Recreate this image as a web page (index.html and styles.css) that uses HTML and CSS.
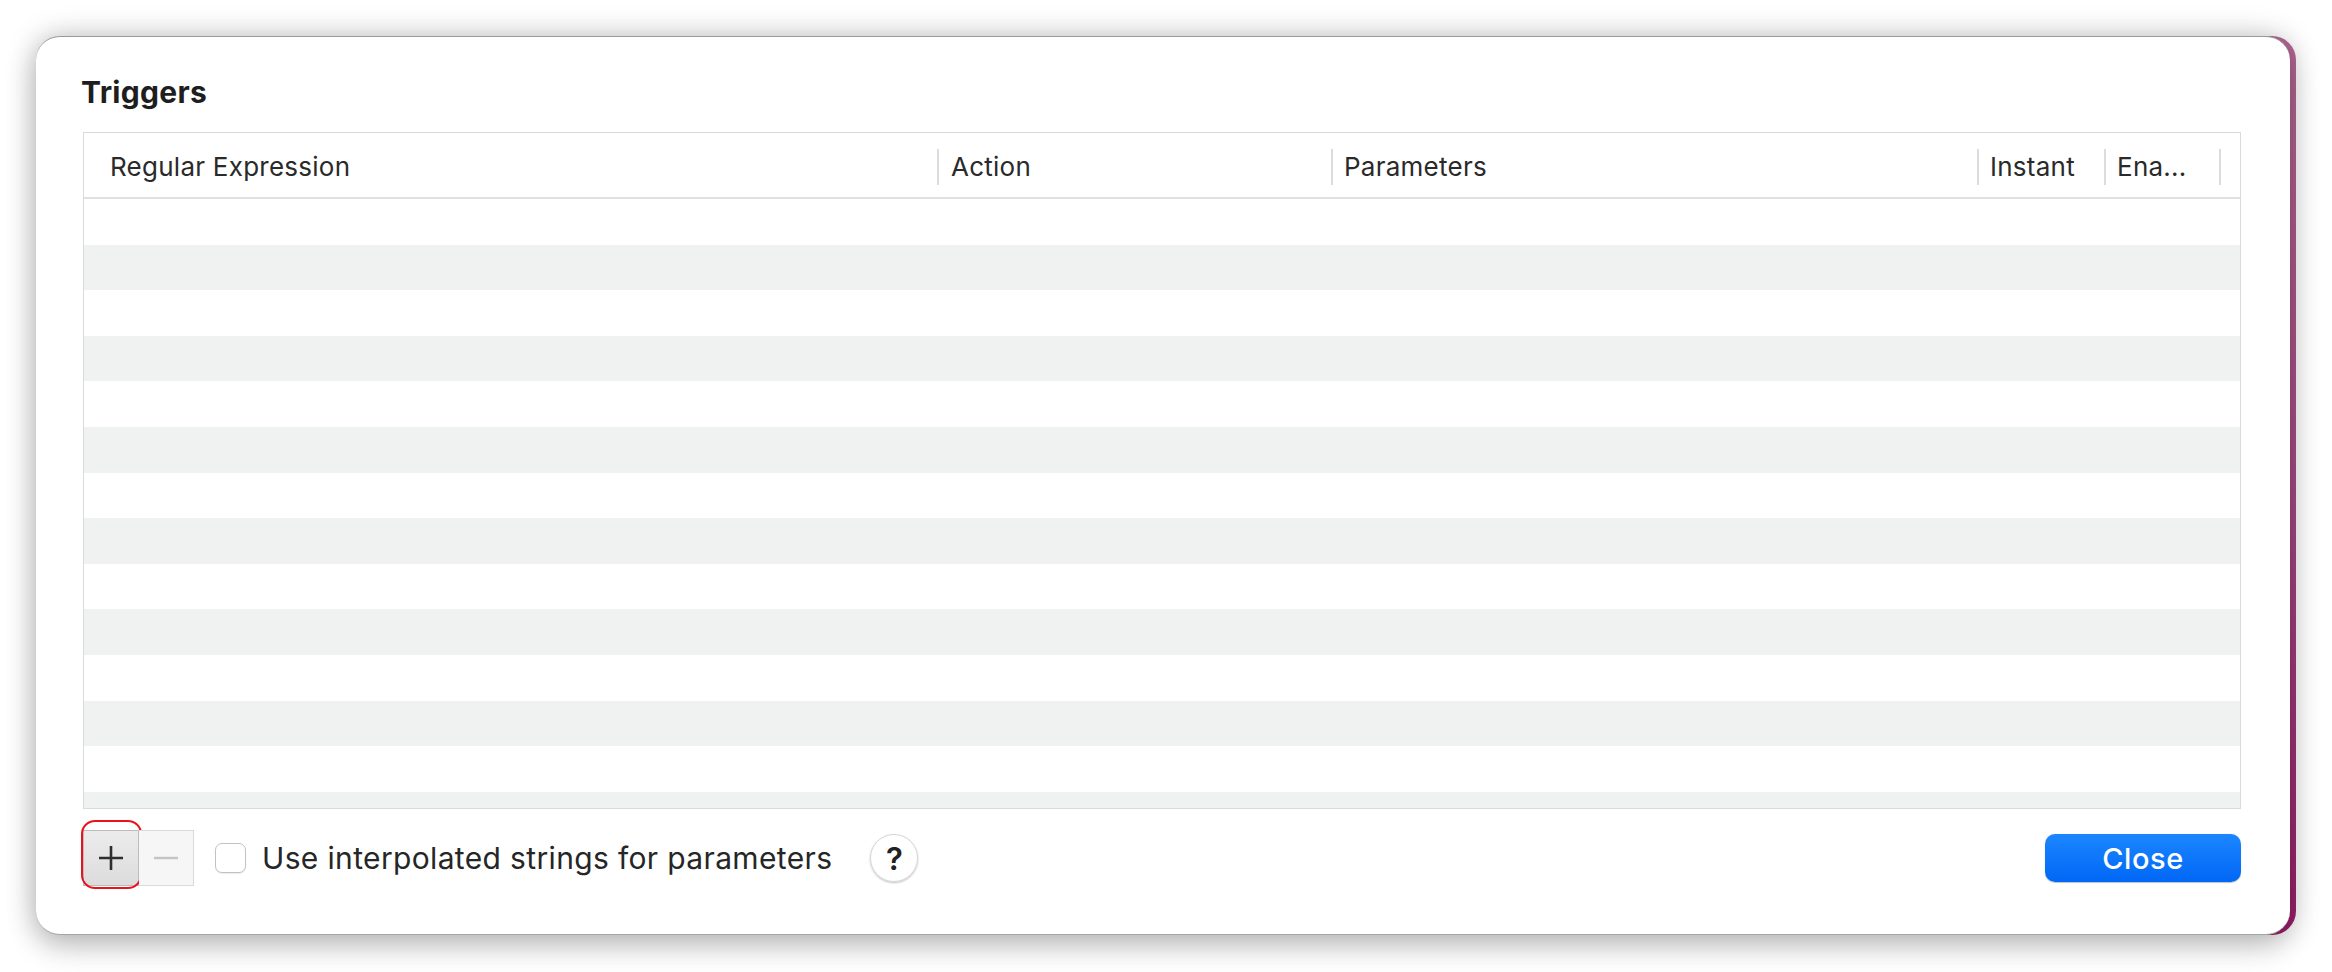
FILE: index.html
```html
<!DOCTYPE html>
<html>
<head>
<meta charset="utf-8">
<link rel="stylesheet" href="styles.css">
</head>
<body>
<div class="stage">
  <div class="backdrop"></div>
  <div class="dialog">
    <div class="title">Triggers</div>
    <div class="table">
      <div class="thead">
        <div class="th c1">Regular Expression</div>
        <div class="th c2 sep">Action</div>
        <div class="th c3 sep">Parameters</div>
        <div class="th c4 sep">Instant</div>
        <div class="th c5 sep">Ena...</div>
        <div class="th c6 sep"></div>
      </div>
      <div class="tbody">
        <div class="row"></div><div class="row alt"></div>
        <div class="row"></div><div class="row alt"></div>
        <div class="row"></div><div class="row alt"></div>
        <div class="row"></div><div class="row alt"></div>
        <div class="row"></div><div class="row alt"></div>
        <div class="row"></div><div class="row alt"></div>
        <div class="row"></div><div class="row alt"></div>
      </div>
    </div>
    <div class="footer">
      <div class="pm">
        <div class="pmbtn plus">
          <svg width="26" height="26" viewBox="0 0 26 26"><path d="M13 1v24M1 13h24" stroke="#2e2e2e" stroke-width="2.6" fill="none"/></svg>
          <span class="ring"></span>
        </div>
        <div class="pmbtn minus">
          <svg width="26" height="26" viewBox="0 0 26 26"><path d="M1 13h24" stroke="#c4c4c4" stroke-width="2.4" fill="none"/></svg>
        </div>
      </div>
      <label class="check"><span class="box"></span><span class="lbl">Use interpolated strings for parameters</span></label>
      <div class="help">?</div>
      <div class="spacer"></div>
      <div class="close">Close</div>
    </div>
  </div>
</div>
</body>
</html>
```
FILE: styles.css
```css
html, body {
  margin: 0;
  padding: 0;
  background: #ffffff;
}
body {
  width: 2332px;
  height: 972px;
  overflow: hidden;
  font-family: "Inter", "Liberation Sans", sans-serif;
}
.stage {
  position: relative;
  padding: 36px 0 0 36px;
}
.backdrop {
  position: absolute;
  left: 42px;
  top: 36px;
  width: 2254px;
  height: 899px;
  border-radius: 24px;
  background: linear-gradient(to bottom, #b86a98 0%, #a84d86 50%, #9c1f6c 100%);
}
.dialog {
  position: relative;
  width: 2254px;
  height: 899px;
  box-sizing: border-box;
  background: #ffffff;
  border-radius: 24px;
  border-top: 1px solid #9a9a9a;
  border-bottom: 1px solid #a6a6a6;
  box-shadow: 0 0 30px rgba(0,0,0,0.22), 0 12px 30px rgba(0,0,0,0.18);
  padding: 39px 49px 0 47px;
  display: flex;
  flex-direction: column;
}
.title {
  font-size: 30px;
  line-height: 34px;
  font-weight: 700;
  letter-spacing: 0.3px;
  color: #1e1e1e;
  margin-left: -2px;
  margin-bottom: 23px;
  margin-top: -1px;
}
.table {
  border: 1.5px solid #dadada;
  height: 677px;
  box-sizing: border-box;
  display: flex;
  flex-direction: column;
  overflow: hidden;
}
.thead {
  display: flex;
  height: 66px;
  flex: none;
  box-sizing: border-box;
  border-bottom: 2px solid #e0e0e0;
  align-items: center;
}
.th {
  position: relative;
  height: 100%;
  display: flex;
  align-items: center;
  box-sizing: border-box;
  font-size: 26px;
  letter-spacing: 0.25px;
  color: #2a2a2a;
  white-space: nowrap;
  padding-top: 2px;
}
.th.sep::before {
  content: "";
  position: absolute;
  left: 0;
  top: 16px;
  width: 1.5px;
  height: 36px;
  background: #dcdcdc;
}
.c1 { width: 853px; padding-left: 26px; }
.c2 { width: 394px; padding-left: 14px; }
.c3 { width: 646px; padding-left: 13px; }
.c4 { width: 127px; padding-left: 13px; }
.c5 { width: 115px; padding-left: 13px; }
.c6 { flex: 1; }
.tbody {
  flex: 1;
  overflow: hidden;
}
.row {
  height: 45.6px;
  background: #ffffff;
}
.row.alt {
  background: #f0f1f1;
}
.footer {
  display: flex;
  align-items: center;
  margin-top: 21px;
  height: 56px;
}
.pm {
  display: flex;
  height: 56px;
}
.pmbtn {
  position: relative;
  width: 56px;
  height: 56px;
  box-sizing: border-box;
  display: flex;
  align-items: center;
  justify-content: center;
}
.plus {
  background: linear-gradient(to bottom, #ececec, #dcdcdc);
  border: 1.5px solid #bcbcbc;
}
.minus {
  width: 55px;
  background: #f6f6f6;
  border: 1.5px solid #dadada;
  border-left: none;
}
.ring {
  position: absolute;
  left: -3px;
  top: -11px;
  width: 61px;
  height: 69px;
  box-sizing: border-box;
  border: 2.5px solid #e8141c;
  border-radius: 14px;
}
.check {
  display: flex;
  align-items: center;
  margin-left: 21px;
}
.box {
  width: 31px;
  height: 30px;
  box-sizing: border-box;
  border: 1.5px solid #c2c2c2;
  border-radius: 7px;
  background: #ffffff;
  box-shadow: 0 1px 1px rgba(0,0,0,0.08);
}
.lbl {
  margin-left: 16px;
  font-size: 30px;
  letter-spacing: 0.35px;
  color: #262626;
  white-space: nowrap;
}
.help {
  margin-left: 38px;
  width: 48px;
  height: 48px;
  box-sizing: border-box;
  border-radius: 50%;
  border: 1px solid #d6d6d6;
  box-shadow: 0 1px 2px rgba(0,0,0,0.25);
  display: flex;
  align-items: center;
  justify-content: center;
  font-size: 31px;
  font-weight: 600;
  color: #222222;
}
.spacer {
  flex: 1;
}
.close {
  width: 196px;
  height: 48px;
  border-radius: 10px;
  background: linear-gradient(to bottom, #1c86ff, #0067f6);
  box-shadow: 0 0.5px 1px rgba(0,0,0,0.25);
  color: #ffffff;
  font-size: 29px;
  letter-spacing: 0.6px;
  font-weight: 500;
  display: flex;
  align-items: center;
  justify-content: center;
}
```
